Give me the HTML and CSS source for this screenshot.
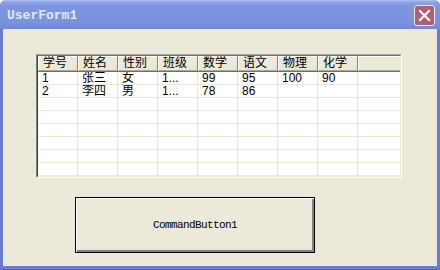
FILE: index.html
```html
<!DOCTYPE html>
<html lang="zh-CN">
<head>
    <meta charset="UTF-8">
    <title>UserForm1</title>
    <link rel="stylesheet" href="styles.css">
</head>
<body>
    <div class="window">
        <div class="titlebar">
            <span class="title">UserForm1</span>
            <div class="close">
                <svg width="21" height="21" viewBox="0 0 21 21">
                    <path d="M6 6 L15 15 M15 6 L6 15" stroke="#fff" stroke-width="2.2" stroke-linecap="square"/>
                </svg>
            </div>
        </div>
        <div class="client">
            <div class="listview">
                <div class="lv-inner">
                    <div class="lv-row lv-head">
                        <div class="lv-cell">学号</div>
                        <div class="lv-cell">姓名</div>
                        <div class="lv-cell">性别</div>
                        <div class="lv-cell">班级</div>
                        <div class="lv-cell">数学</div>
                        <div class="lv-cell">语文</div>
                        <div class="lv-cell">物理</div>
                        <div class="lv-cell">化学</div>
                        <div class="lv-cell lv-fill"></div>
                    </div>
                    <div class="lv-row">
                        <div class="lv-cell">1</div>
                        <div class="lv-cell">张三</div>
                        <div class="lv-cell">女</div>
                        <div class="lv-cell">1...</div>
                        <div class="lv-cell">99</div>
                        <div class="lv-cell">95</div>
                        <div class="lv-cell">100</div>
                        <div class="lv-cell">90</div>
                        <div class="lv-cell lv-fill"></div>
                    </div>
                    <div class="lv-row">
                        <div class="lv-cell">2</div>
                        <div class="lv-cell">李四</div>
                        <div class="lv-cell">男</div>
                        <div class="lv-cell">1...</div>
                        <div class="lv-cell">78</div>
                        <div class="lv-cell">86</div>
                        <div class="lv-cell"></div>
                        <div class="lv-cell"></div>
                        <div class="lv-cell lv-fill"></div>
                    </div>
                    <div class="lv-row">
                        <div class="lv-cell"></div><div class="lv-cell"></div><div class="lv-cell"></div><div class="lv-cell"></div><div class="lv-cell"></div><div class="lv-cell"></div><div class="lv-cell"></div><div class="lv-cell"></div><div class="lv-cell lv-fill"></div>
                    </div>
                    <div class="lv-row">
                        <div class="lv-cell"></div><div class="lv-cell"></div><div class="lv-cell"></div><div class="lv-cell"></div><div class="lv-cell"></div><div class="lv-cell"></div><div class="lv-cell"></div><div class="lv-cell"></div><div class="lv-cell lv-fill"></div>
                    </div>
                    <div class="lv-row">
                        <div class="lv-cell"></div><div class="lv-cell"></div><div class="lv-cell"></div><div class="lv-cell"></div><div class="lv-cell"></div><div class="lv-cell"></div><div class="lv-cell"></div><div class="lv-cell"></div><div class="lv-cell lv-fill"></div>
                    </div>
                    <div class="lv-row">
                        <div class="lv-cell"></div><div class="lv-cell"></div><div class="lv-cell"></div><div class="lv-cell"></div><div class="lv-cell"></div><div class="lv-cell"></div><div class="lv-cell"></div><div class="lv-cell"></div><div class="lv-cell lv-fill"></div>
                    </div>
                    <div class="lv-row">
                        <div class="lv-cell"></div><div class="lv-cell"></div><div class="lv-cell"></div><div class="lv-cell"></div><div class="lv-cell"></div><div class="lv-cell"></div><div class="lv-cell"></div><div class="lv-cell"></div><div class="lv-cell lv-fill"></div>
                    </div>
                    <div class="lv-row">
                        <div class="lv-cell"></div><div class="lv-cell"></div><div class="lv-cell"></div><div class="lv-cell"></div><div class="lv-cell"></div><div class="lv-cell"></div><div class="lv-cell"></div><div class="lv-cell"></div><div class="lv-cell lv-fill"></div>
                    </div>
                </div>
            </div>
            <div class="cmd">CommandButton1</div>
        </div>
    </div>
</body>
</html>
```

FILE: styles.css
```css
body {
    margin: 0;
    padding: 0;
    background: #fff;
}

.window {
    width: 440px;
    height: 270px;
    box-sizing: border-box;
    display: flex;
    flex-direction: column;
    background: #6a7ad8;
    border-radius: 6px 6px 0 0;
    padding: 0 3px 4px 3px;
    box-shadow: inset 0 -1px #5564cc;
}

.titlebar {
    height: 29px;
    margin: 0 -3px;
    padding: 0 5px 0 7px;
    display: flex;
    align-items: center;
    justify-content: space-between;
    border-radius: 6px 6px 0 0;
    background: linear-gradient(#b4c3f2 0, #8fa4e8 2px, #7e96e2 6px, #7a92df 22px, #7089da 29px);
}

.title {
    font-family: "Liberation Mono", "DejaVu Sans Mono", monospace;
    font-size: 13px;
    font-weight: bold;
    color: #e2e8f8;
    margin-top: 1px;
}

.close {
    width: 21px;
    height: 21px;
    box-sizing: border-box;
    border: 1px solid #f0e8ee;
    border-radius: 3px;
    background: #b25f71;
    margin-top: 1px;
}

.close svg {
    display: block;
    margin: -1px;
}

.client {
    flex: 1;
    background: #ece9d8;
    padding: 25px 0 0 33px;
}

.listview {
    width: 366px;
    box-sizing: border-box;
    border: 1px solid;
    border-color: #aca899 #fff #fff #808080;
}

.lv-inner {
    border: 1px solid;
    border-color: #716f64 #ece9d8 #ece9d8 #404040;
    background: #fff;
    font-family: "Liberation Sans", "Noto Sans CJK SC", sans-serif;
    font-size: 12px;
    color: #000;
}

.lv-row {
    display: grid;
    grid-template-columns: repeat(8, 40px) 1fr;
    height: 13px;
    box-sizing: border-box;
    border-bottom: 1px solid #ece9d8;
}

.lv-cell {
    box-sizing: border-box;
    border-right: 1px solid #ece9d8;
    padding-left: 4px;
    line-height: 12px;
    white-space: nowrap;
    overflow: hidden;
}

.lv-fill {
    border-right: none;
}

.lv-head {
    height: 16px;
    border-bottom: 1px solid #716f64;
    background: #ece9d8;
}

.lv-head .lv-cell {
    padding-left: 5px;
    line-height: 15px;
    border-right: 1px solid #808080;
    box-shadow: inset 1px 1px #fff, inset 0 -1px #aca899;
}

.lv-head .lv-fill {
    border-right: none;
}

.cmd {
    width: 240px;
    height: 56px;
    box-sizing: border-box;
    margin: 19px 0 0 39px;
    border: 1px solid #000;
    background: #ece9d8;
    box-shadow: inset 1px 1px #fff, inset -2px -2px #808080;
    display: flex;
    align-items: center;
    justify-content: center;
    font-family: "Liberation Mono", "DejaVu Sans Mono", monospace;
    font-size: 11px;
    letter-spacing: -0.6px;
    color: #000;
}
```
